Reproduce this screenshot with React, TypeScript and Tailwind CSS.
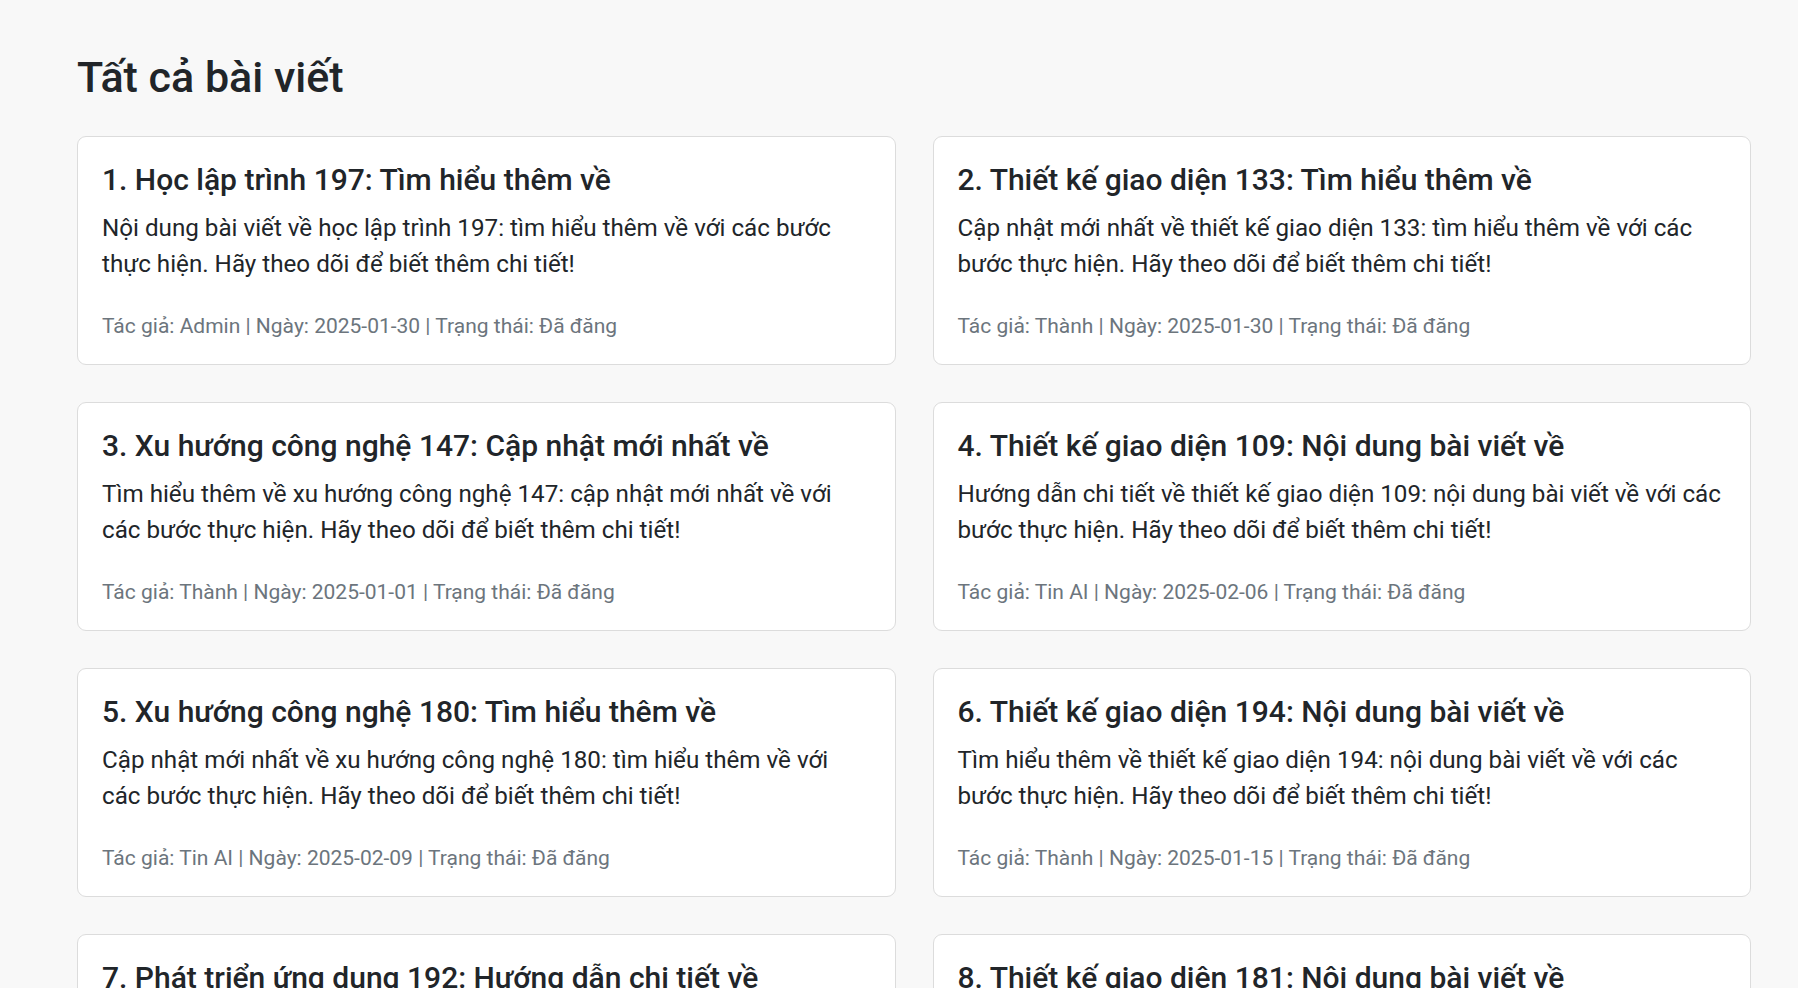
import React from 'react';

const posts = [
  {
    title: 'Học lập trình 197: Tìm hiểu thêm về',
    body: 'Nội dung bài viết về học lập trình 197: tìm hiểu thêm về với các bước thực hiện. Hãy theo dõi để biết thêm chi tiết!',
    author: 'Admin',
    date: '2025-01-30',
  },
  {
    title: 'Thiết kế giao diện 133: Tìm hiểu thêm về',
    body: 'Cập nhật mới nhất về thiết kế giao diện 133: tìm hiểu thêm về với các bước thực hiện. Hãy theo dõi để biết thêm chi tiết!',
    author: 'Thành',
    date: '2025-01-30',
  },
  {
    title: 'Xu hướng công nghệ 147: Cập nhật mới nhất về',
    body: 'Tìm hiểu thêm về xu hướng công nghệ 147: cập nhật mới nhất về với các bước thực hiện. Hãy theo dõi để biết thêm chi tiết!',
    author: 'Thành',
    date: '2025-01-01',
  },
  {
    title: 'Thiết kế giao diện 109: Nội dung bài viết về',
    body: 'Hướng dẫn chi tiết về thiết kế giao diện 109: nội dung bài viết về với các bước thực hiện. Hãy theo dõi để biết thêm chi tiết!',
    author: 'Tin AI',
    date: '2025-02-06',
  },
  {
    title: 'Xu hướng công nghệ 180: Tìm hiểu thêm về',
    body: 'Cập nhật mới nhất về xu hướng công nghệ 180: tìm hiểu thêm về với các bước thực hiện. Hãy theo dõi để biết thêm chi tiết!',
    author: 'Tin AI',
    date: '2025-02-09',
  },
  {
    title: 'Thiết kế giao diện 194: Nội dung bài viết về',
    body: 'Tìm hiểu thêm về thiết kế giao diện 194: nội dung bài viết về với các bước thực hiện. Hãy theo dõi để biết thêm chi tiết!',
    author: 'Thành',
    date: '2025-01-15',
  },
  {
    title: 'Phát triển ứng dụng 192: Hướng dẫn chi tiết về',
    body: 'Nội dung bài viết về phát triển ứng dụng 192: hướng dẫn chi tiết về với các bước thực hiện. Hãy theo dõi để biết thêm chi tiết!',
    author: 'Admin',
    date: '2025-01-22',
  },
  {
    title: 'Thiết kế giao diện 181: Nội dung bài viết về',
    body: 'Hướng dẫn chi tiết về thiết kế giao diện 181: nội dung bài viết về với các bước thực hiện. Hãy theo dõi để biết thêm chi tiết!',
    author: 'Thành',
    date: '2025-02-03',
  },
];

export default function App() {
  return (
    <div className="min-h-screen bg-[#f8f8f8] font-['Roboto','Noto_Sans',sans-serif] text-[#212529]">
      <div className="pl-[77px] pr-[47px] pt-[52px] pb-12">
        {/* PAGE TITLE */}
        <h3 className="text-[43px] leading-[1.2] font-medium mb-[32px]">Tất cả bài viết</h3>

        <div className="grid grid-cols-2 gap-x-[37px] gap-y-[37px]">
          {posts.map((post, i) => (
            <div
              key={i}
              className="bg-white border border-[#dcdcdc] rounded-[9px] px-[24px] pt-[25px] pb-[20px] h-[229px]"
            >
              <h5 className="text-[30px] leading-[36px] font-medium mb-[12px]">
                {i + 1}. {post.title}
              </h5>
              <p className="text-[24.2px] leading-[36px] mb-[29px]">{post.body}</p>
              <p className="text-[21px] leading-[31px] text-[#6c757d]">
                Tác giả: {post.author} | Ngày: {post.date} | Trạng thái: Đã đăng
              </p>
            </div>
          ))}
        </div>
      </div>
    </div>
  );
}
